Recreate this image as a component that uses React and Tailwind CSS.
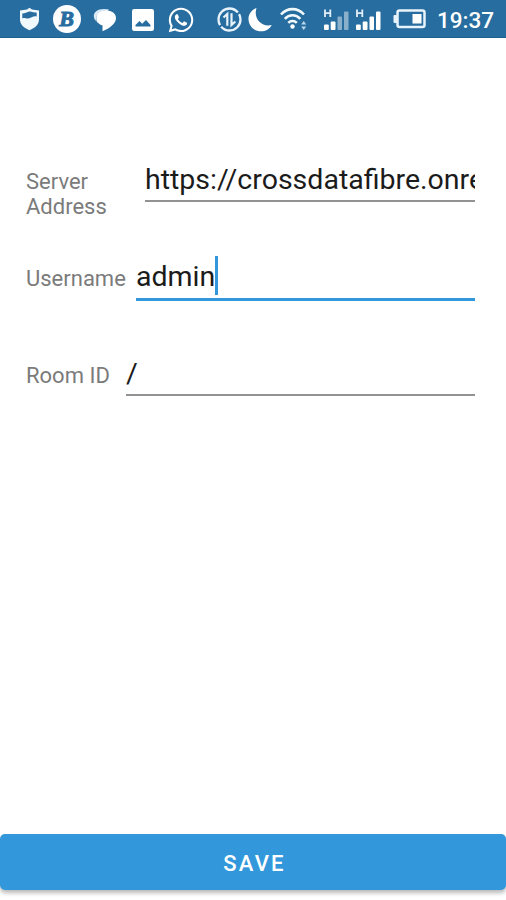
import React, { useState } from 'react'
import clsx from 'clsx'
import { FaWhatsapp } from 'react-icons/fa'

const ShieldIcon = () => (
    <svg width="21" height="24" viewBox="0 0 21 24" fill="none">
        <path d="M10.500 .8 13 2.500 20 3.500V12.500C20 17.500 16 21 10.500 23.200 5 21 1 17.500 1 12.500V3.500L8 2.500Z" fill="#f2f9fd" />
        <path d="M3.300 6.500C6 6.500 8 5 10.500 4.500 13 5 15.500 5.500 17.700 5.500V9.500C14 8.500 12.500 11.500 9 11.500 6.500 11.500 5 10.500 3.300 11.500Z" fill="#286d9f" />
    </svg>
)

const BetIcon = () => (
    <span className="flex h-[28px] w-[28px] items-center justify-center rounded-full bg-white pr-[1px] font-['Liberation_Serif',serif] text-[22px] leading-none font-bold text-[#286d9f] italic [-webkit-text-stroke:1px_#286d9f]">
        B
    </span>
)

const ChatIcon = () => (
    <svg width="24" height="24" viewBox="0 0 24 24" fill="none">
        <path d="M11 1C5 1 .8 3.800 .8 8c0 2.500 1.200 4.500 3.700 6L4.500 15 8 13.500 16 1.600Z" fill="#dbeaf5" />
        <path d="M3.800 13.500C2 8 6 3.500 12 3" stroke="#7fadd0" strokeWidth="1" />
        <path d="M13 2.500C7 2.500 3.500 5.500 3.500 10c0 3.800 2.500 6.500 6 7.500V23.200c5-2 13.500-6.500 13.500-13.200C23 5.500 19 2.500 13 2.500Z" fill="#fff" />
    </svg>
)

const PhotoIcon = () => (
    <svg width="22" height="22" viewBox="0 0 22 22">
        <rect width="22" height="22" rx="2.200" fill="#fff" />
        <path d="M3.500 17.500V16L7.500 12l2.700 2.800L14 11l4.500 5v1.500Z" fill="#286d9f" />
    </svg>
)

const DataIcon = () => (
    <svg width="25" height="25" viewBox="0 0 25 25" fill="none" stroke="#e8f3fb">
        <circle cx="12.500" cy="12.500" r="11" strokeWidth="2.300" strokeDasharray="32.500 2" strokeDashoffset="6" />
        <path d="M6.500 10.500 10.300 7V18.800" strokeWidth="2.200" />
        <path d="M14.500 6.200V18L18.300 14.500" strokeWidth="2.200" />
    </svg>
)

const MoonIcon = () => (
    <svg width="24" height="25" viewBox="0 0 24 25">
        <path d="M8.500 1C3.500 2.800 .5 6.800 .5 11.800 .5 18.800 6 24.300 13 24.300c4.500 0 8.800-2.200 10.700-6.300C14 20.500 5 12 8.500 1Z" fill="#fff" />
    </svg>
)

const WifiIcon = () => (
    <svg width="28" height="24" viewBox="0 0 28 24" fill="none" stroke="#f2f9fd" strokeWidth="2.600">
        <path d="M1 7.500C7.500.3 17.500.3 24 7.500" />
        <path d="M4.800 11.800c4.500-4.800 11-4.800 15.500 0" />
        <path d="M8.300 15.800c2.500-2.500 6-2.500 8.500 0" />
        <circle cx="12.500" cy="19.500" r="2.200" fill="#fff" stroke="none" />
        <path d="m21.200 17.500 2.500-3.500 2.500 3.500ZM21.200 19.500l2.500 3.500 2.500-3.500Z" fill="#b9d8ee" stroke="none" />
    </svg>
)

const SignalIcon = ({ weak }) => (
    <svg width="25" height="22" viewBox="0 0 25 22" fill="#fff">
        <path d="M1 .5v7.500M6.300 .5v7.500M1 4.200H6.300" stroke="#e0eef8" strokeWidth="1.800" fill="none" />
        <rect x="0" y="15.500" width="4.800" height="5.500" rx="1" />
        <rect x="6.700" y="12.500" width="4.800" height="8.500" rx="1" />
        <rect x="13.500" y="7.500" width="4.500" height="13.500" rx="1" opacity={weak ? 0.45 : 1} />
        <rect x="20" y="2.500" width="4.500" height="18.500" rx="1" opacity={weak ? 0.45 : 1} />
    </svg>
)

const BatteryIcon = () => (
    <svg width="33" height="20" viewBox="0 0 33 20" fill="none">
        <rect x="4.500" y="1.500" width="27" height="16.500" rx="2" stroke="#e8f3fb" strokeWidth="2.500" />
        <rect x="0.500" y="6" width="3.500" height="8" rx="1" fill="#e8f3fb" />
        <rect x="19.500" y="5" width="9" height="9.500" fill="#fff" />
    </svg>
)

const StatusBar = () => (
    <div className="flex h-[38px] items-center border-b border-[#1c628f] bg-[#286d9f] pl-[19px] text-white">
        <div className="flex items-center">
            <span className="pt-[1px]"><ShieldIcon /></span>
            <span className="ml-[13px] pt-[1px]"><BetIcon /></span>
            <span className="ml-[12px] pt-[2px]"><ChatIcon /></span>
            <span className="ml-[15px] pt-[2px]"><PhotoIcon /></span>
            <span className="ml-[13px] pt-[2px]"><FaWhatsapp size={28} /></span>
        </div>
        <div className="ml-[22px] flex items-center">
            <span className="pt-[2px]"><DataIcon /></span>
            <span className="ml-[6px] pt-[2px]"><MoonIcon /></span>
            <span className="ml-[8px] pt-[1px]"><WifiIcon /></span>
            <span className="ml-[16px] pt-[2px]"><SignalIcon weak /></span>
            <span className="ml-[7px] pt-[2px]"><SignalIcon /></span>
            <span className="ml-[12px] pt-[1px]"><BatteryIcon /></span>
            <span className="ml-[11px] pt-[3px] text-[22.500px] leading-none font-medium">19:37</span>
        </div>
    </div>
)

const Field = ({ label, value, focused, onFocus, labelClass }) => (
    <div className="flex h-[97px] items-start">
        <div className={clsx('shrink-0 pt-[14px] text-[22px] leading-[25px] text-[#7b7b7b]', labelClass)}>{label}</div>
        <div
            onClick={onFocus}
            className={clsx(
                'flex min-w-0 flex-1 overflow-hidden text-[28.500px] leading-[50px] whitespace-nowrap text-[#1b1b1b]',
                focused ? 'h-[49px] border-b-[3px] border-[#3398db]' : 'h-[47px] border-b-2 border-[#929292]'
            )}
        >
            <span>{value}</span>
            {focused && <span className="mt-[4px] h-[39px] w-[3px] shrink-0 bg-[#3398db]" />}
        </div>
    </div>
)

const App = () => {
    const [active, setActive] = useState('username')

    const fields = [
        { id: 'server', label: 'Server Address', value: 'https://crossdatafibre.onre', labelClass: 'w-[119px] pr-[20px]' },
        { id: 'username', label: 'Username', value: 'admin', labelClass: 'w-[110px]' },
        { id: 'room', label: 'Room ID', value: '/', labelClass: 'w-[100px]' },
    ]

    return (
        <div className="flex h-[900px] w-[506px] flex-col overflow-hidden bg-white font-[Roboto,sans-serif]">
            <StatusBar />

            <div className="flex-1 pt-[117px] pr-[31px] pl-[26px]">
                {fields.map(({ id, ...field }) => (
                    <Field key={id} {...field} focused={active === id} onFocus={() => setActive(id)} />
                ))}
            </div>

            <button
                type="button"
                className="mb-[10px] h-[56px] w-full rounded-[5px] bg-[#3398db] pt-[3px] pl-[3px] text-[22px] font-medium tracking-[2.200px] text-white shadow-[0_3px_4px_rgba(0,0,0,0.28)]"
            >
                SAVE
            </button>
        </div>
    )
}

export default App
